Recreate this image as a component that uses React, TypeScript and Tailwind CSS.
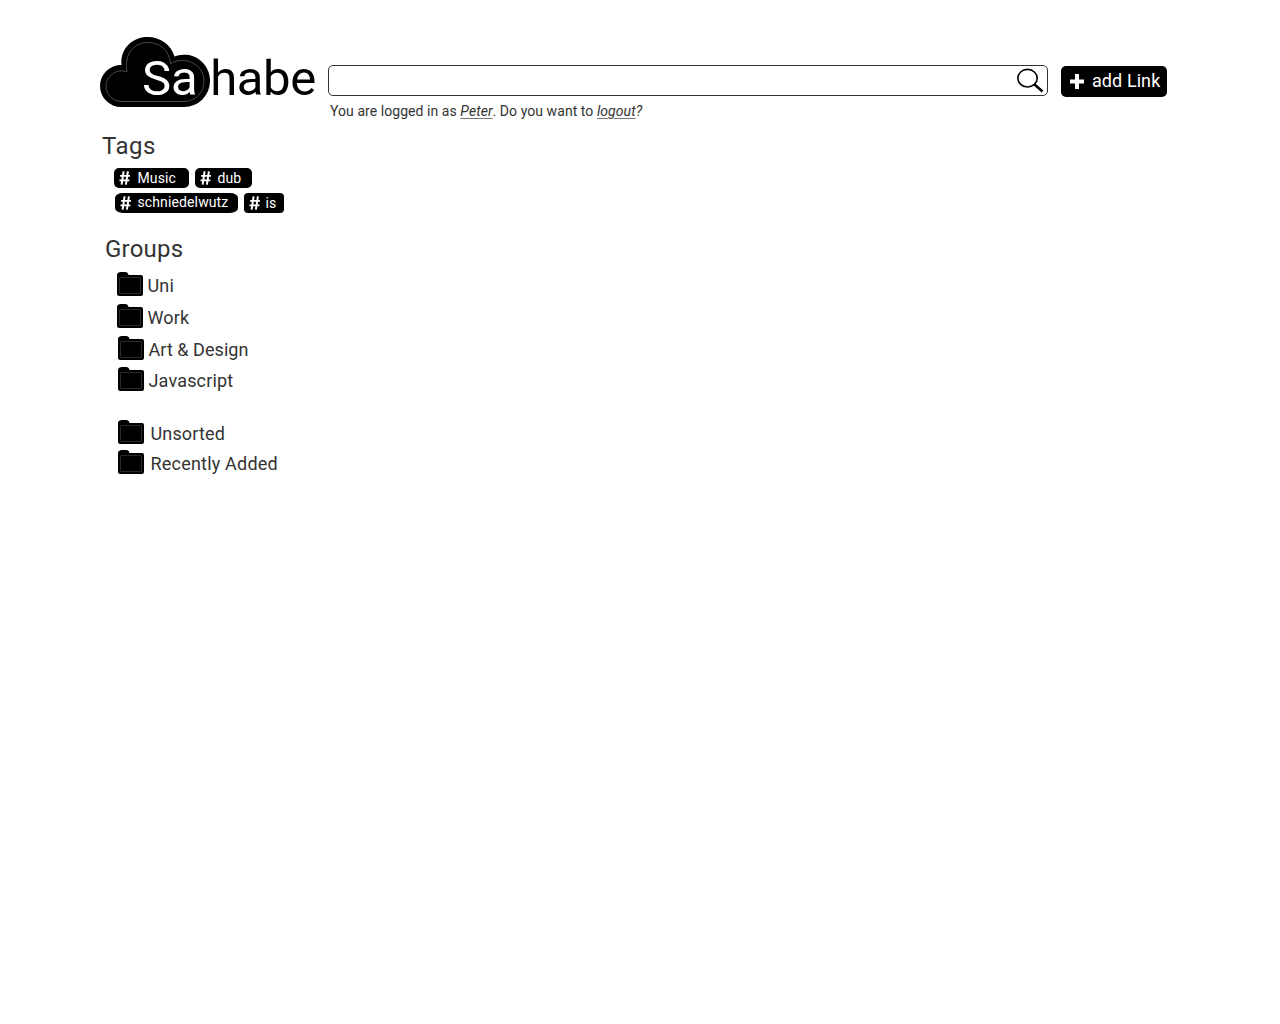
import React from "react";

function Cloud() {
  return (
    <svg className="block h-[70px] w-[110px]" viewBox="0 0 110 70">
      <path
        d="M21 70A21 21 0 0 1 0 49A21 21 0 0 1 21.500 28C20 12 32 0 47.500 0C61 0 71 8 74.500 19.500A26 26 0 0 1 110 44A26 26 0 0 1 84 70Z"
        fill="#000"
      />
      <path
        d="M22 64.500A15.500 15.500 0 0 1 6 49C6 39 16 31.500 27 34.500C24 18 33 5.500 48 5.500C60 5.500 69 13 70.500 26.500C86 18 104 28 104 44A20 20 0 0 1 85 64.500Z"
        fill="none"
        stroke="#777"
        strokeWidth="0.6"
      />
    </svg>
  );
}

function Folder() {
  return (
    <svg className="block h-6 w-[26px] shrink-0" viewBox="0 0 26 24">
      <path
        d="M0 2.500Q0.500 0 4 0H8Q11 0 11.500 3H24Q26 3 26 5V22Q26 24 24 24H2.500Q0 24 0 21.500Z"
        fill="#000"
      />
      <rect x="2.500" y="5.500" width="21" height="16" rx="0.500" fill="none" stroke="#333" strokeWidth="0.8" />
    </svg>
  );
}

function Hash() {
  return (
    <svg className="block h-[14px] w-[12px] shrink-0" viewBox="0 0 12 14" fill="none" stroke="#fff">
      <path d="M4.600 0.300L2.600 13.700M8.900 0.300L6.900 13.700" strokeWidth="2" />
      <path d="M1.100 4.800H11M0.500 9.300H10.400" strokeWidth="1.800" />
    </svg>
  );
}

function Tag({ label, className, textClass }: { label: string; className: string; textClass: string }) {
  return (
    <span className={`flex h-5 items-start bg-black pt-[3px] text-[14px] leading-[14px] tracking-[0.12px] text-white ${className}`}>
      <Hash />
      <span className={`whitespace-nowrap ${textClass}`}>{label}</span>
    </span>
  );
}

function Group({ label, className, textClass }: { label: string; className: string; textClass: string }) {
  return (
    <li className={`flex h-6 items-start ${className}`}>
      <Folder />
      <span className={`whitespace-nowrap pt-[2px] text-[18px] leading-6 ${textClass}`}>{label}</span>
    </li>
  );
}

export default function App() {
  return (
    <div className="min-h-screen bg-white font-['Roboto',sans-serif] text-[#333]">
      <header className="flex items-start pl-[100px] pt-[37px]">
        <div className="relative w-[228px] shrink-0">
          <Cloud />
          <div className="absolute left-[42px] top-[17px] flex whitespace-nowrap text-[49px] leading-[50px] text-black">
            <span className="text-white">Sa</span>
            <span className="pl-[12.5px] tracking-[-0.4px]">habe</span>
          </div>
        </div>
        <div className="w-[720px] shrink-0 pt-[28px]">
          <div className="flex h-[31px] items-start justify-end rounded-[5px] border border-[#333] pr-[3px] pt-[2px]">
            <svg className="block h-[26px] w-[27px]" viewBox="0 0 27 26" fill="none" stroke="#000">
              <ellipse cx="10.500" cy="10.200" rx="9.700" ry="8.800" strokeWidth="1.600" />
              <path d="M17 16L25.500 23.500" strokeWidth="2.600" />
            </svg>
          </div>
          <p className="whitespace-nowrap pl-[2px] pt-[5px] text-[14px] leading-5 tracking-[0.06px]">
            You are logged in as <i className="underline decoration-[#777] underline-offset-2">Peter</i>. Do you want to{" "}
            <i>
              <span className="underline decoration-[#777] underline-offset-2">logout</span>?
            </i>
          </p>
        </div>
        <button className="ml-[13px] mt-[29px] flex h-[31px] w-[106px] items-start rounded-[5px] bg-black pl-[9px] pt-[3px] text-[18px] leading-6 tracking-[0.08px] text-white">
          <svg className="mt-[5px] block h-[15px] w-[14px] shrink-0" viewBox="0 0 14 15">
            <path d="M7 0V15M0 7.500H14" stroke="#fff" strokeWidth="4" />
          </svg>
          <span className="whitespace-nowrap pl-2">add Link</span>
        </button>
      </header>
      <aside className="w-[300px] pt-[13px]">
        <h2 className="pl-[102px] text-[24px] leading-6 tracking-[0.5px]">Tags</h2>
        <div className="mt-[10px] flex gap-[6px] pl-[114px]">
          <Tag label="Music" className="w-[75px] rounded-[5px] pl-[5px]" textClass="pl-[6.5px]" />
          <Tag label="dub" className="w-[57px] rounded-[5px] pl-[5px]" textClass="pl-[5.5px]" />
        </div>
        <div className="mt-[5px] flex gap-[6px] pl-[115px]">
          <Tag label="schniedelwutz" className="w-[123px] rounded-[8px/5px] pl-[5px]" textClass="pl-[5.5px] -mt-px" />
          <Tag label="is" className="w-[40px] rounded-[4px] pl-[5px]" textClass="pl-[4.5px]" />
        </div>
        <h2 className="mt-[24px] pl-[105px] text-[24px] leading-6 tracking-[0.2px]">Groups</h2>
        <ul className="mt-[11px] pl-[117px]">
          <Group label="Uni" className="" textClass="pl-[4.5px] tracking-[0.2px]" />
          <Group label="Work" className="mt-2" textClass="pl-[4.5px] tracking-[0.15px]" />
          <Group label="Art & Design" className="ml-px mt-2" textClass="pl-[4.5px] tracking-[0.05px]" />
          <Group label="Javascript" className="ml-px mt-[7px]" textClass="pl-[4.5px] tracking-[0.17px]" />
        </ul>
        <ul className="mt-[29px] pl-[118px]">
          <Group label="Unsorted" className="" textClass="pl-[6.5px] tracking-[0.15px]" />
          <Group label="Recently Added" className="mt-[6px]" textClass="pl-[6.5px] tracking-[0.2px]" />
        </ul>
      </aside>
    </div>
  );
}
